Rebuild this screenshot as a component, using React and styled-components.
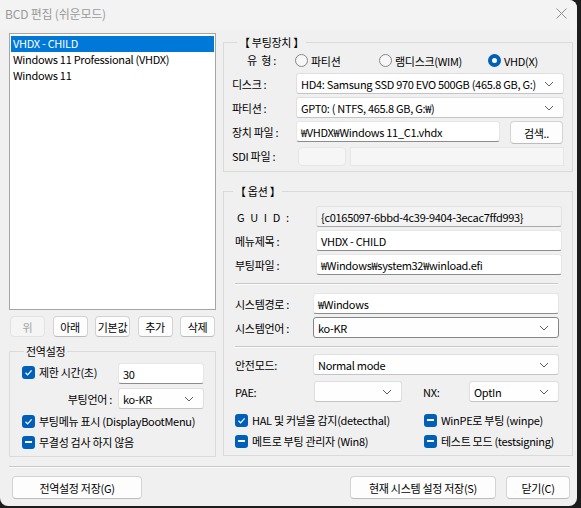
import styled, { createGlobalStyle } from "styled-components";

const GlobalStyle = createGlobalStyle`
  html, body {
    margin: 0;
    padding: 0;
    background: #1c1c1c;
  }
  body {
    font-family: "Noto Sans CJK KR", "Liberation Sans", sans-serif;
    font-size: 11px;
    letter-spacing: -0.3px;
    line-height: 16px;
    color: #000;
  }
`;

const Chevron = () => (
  <svg width="10" height="6" viewBox="0 0 10 6">
    <polyline points="1,1 5,5 9,1" fill="none" stroke="#5f5f5f" strokeWidth="1" />
  </svg>
);

const Check = () => (
  <svg width="9" height="9" viewBox="0 0 9 9">
    <polyline points="1.5,4.8 3.6,6.8 7.6,2.4" fill="none" stroke="#fff" strokeWidth="1.2" />
  </svg>
);

const CheckBox = ({ mode = "check", children }) => (
  <CheckRow>
    <Box>{mode === "check" ? <Check /> : <Dash />}</Box>
    <span>{children}</span>
  </CheckRow>
);

const Radio = ({ checked, children }) => (
  <RadioItem>
    <RadioDot $checked={checked} />
    <span>{children}</span>
  </RadioItem>
);

const Select = ({ value, focused, width }) => (
  <Combo $focused={focused} $width={width}>
    <span>{value}</span>
    <Chevron />
  </Combo>
);

export default function App() {
  return (
    <>
      <GlobalStyle />
      <Window>
        <TitleBar>
          <Title>BCD 편집 (쉬운모드)</Title>
          <svg width="11" height="11" viewBox="0 0 11 11">
            <path d="M0.5 0.5 L10.5 10.5 M10.5 0.5 L0.5 10.5" stroke="#8f8f8f" strokeWidth="1" />
          </svg>
        </TitleBar>

        <Body>
          <LeftCol>
            <ListBox>
              <ListItem $selected>VHDX - CHILD</ListItem>
              <ListItem>Windows 11 Professional (VHDX)</ListItem>
              <ListItem>Windows 11</ListItem>
            </ListBox>
            <ButtonRow>
              <SmallButton disabled>위</SmallButton>
              <SmallButton>아래</SmallButton>
              <SmallButton>기본값</SmallButton>
              <SmallButton>추가</SmallButton>
              <SmallButton>삭제</SmallButton>
            </ButtonRow>
            <Group $pad="5px 11px 5px 12px">
              <Legend $offset="2px">전역설정</Legend>
              <GlobalGrid>
                <CheckBox>제한 시간(초)</CheckBox>
                <TextField>30</TextField>
                <FieldLabel $right>부팅언어 :</FieldLabel>
                <Select value="ko-KR" />
              </GlobalGrid>
              <CheckList>
                <CheckBox>부팅메뉴 표시 (DisplayBootMenu)</CheckBox>
                <CheckBox mode="dash">무결성 검사 하지 않음</CheckBox>
              </CheckList>
            </Group>
          </LeftCol>

          <RightCol>
            <Group $pad="0 9px 5px 8px">
              <Legend $offset="5px">【 부팅장치 】</Legend>
              <DeviceGrid>
                <FieldLabel $indent="15px">유&nbsp;&nbsp;형 :</FieldLabel>
                <RadioRow>
                  <Radio>파티션</Radio>
                  <Radio>램디스크(WIM)</Radio>
                  <Radio checked>VHD(X)</Radio>
                </RadioRow>
                <FieldLabel>디스크 :</FieldLabel>
                <Select value="HD4: Samsung SSD 970 EVO 500GB (465.8 GB, G:)" />
                <FieldLabel>파티션 :</FieldLabel>
                <Select value="GPT0: ( NTFS, 465.8 GB, G:₩)" />
                <FieldLabel>장치 파일 :</FieldLabel>
                <FileRow>
                  <TextField>₩VHDX₩Windows 11_C1.vhdx</TextField>
                  <Button $width="53px">검색..</Button>
                </FileRow>
                <FieldLabel>SDI 파일 :</FieldLabel>
                <SdiRow>
                  <DisabledField $width="48px" $round />
                  <DisabledField />
                </SdiRow>
              </DeviceGrid>
            </Group>

            <Group $pad="8px 10px 5px 11px">
              <Legend $offset="-2px">【 옵션 】</Legend>
              <OptionGrid $col="81px" $right="0">
                <FieldLabel $spaced $indent="2px">G U I D :</FieldLabel>
                <ReadOnlyField>{"{c0165097-6bbd-4c39-9404-3ecac7ffd993}"}</ReadOnlyField>
                <FieldLabel>메뉴제목 :</FieldLabel>
                <TextField>VHDX - CHILD</TextField>
                <FieldLabel>부팅파일 :</FieldLabel>
                <TextField>₩Windows₩system32₩winload.efi</TextField>
              </OptionGrid>
              <Separator $margin="8px 4px 8px 0" />
              <OptionGrid $col="78px" $right="3px">
                <FieldLabel>시스템경로 :</FieldLabel>
                <TextField>₩Windows</TextField>
                <FieldLabel>시스템언어 :</FieldLabel>
                <Select value="ko-KR" focused />
              </OptionGrid>
              <Separator $margin="8px 4px 6px 0" />
              <OptionGrid $col="78px" $right="3px">
                <FieldLabel>안전모드:</FieldLabel>
                <Select value="Normal mode" />
              </OptionGrid>
              <PaeRow>
                <FieldLabel>PAE:</FieldLabel>
                <Select value="" />
                <FieldLabel>NX:</FieldLabel>
                <Select value="OptIn" />
              </PaeRow>
              <TwoCheckCols>
                <CheckBox>HAL 및 커널을 감지(detecthal)</CheckBox>
                <CheckBox mode="dash">WinPE로 부팅 (winpe)</CheckBox>
                <CheckBox mode="dash">메트로 부팅 관리자 (Win8)</CheckBox>
                <CheckBox mode="dash">테스트 모드 (testsigning)</CheckBox>
              </TwoCheckCols>
            </Group>
          </RightCol>
        </Body>

        <Separator $margin="9px 7px 8px 9px" />
        <Footer>
          <Button $width="130px">전역설정 저장(G)</Button>
          <FooterRight>
            <Button $width="146px">현재 시스템 설정 저장(S)</Button>
            <Button $width="64px">닫기(C)</Button>
          </FooterRight>
        </Footer>
      </Window>
    </>
  );
}

const Window = styled.div`
  width: 577px;
  height: 506px;
  background: #f0f0f0;
  border-radius: 0 8px 8px 8px;
  overflow: hidden;
  display: flex;
  flex-direction: column;
`;

const TitleBar = styled.div`
  height: 30px;
  flex: none;
  display: flex;
  align-items: center;
  justify-content: space-between;
  padding: 0 10px 3px 5px;
  box-sizing: border-box;
  background: #f3f3f3;
`;

const Title = styled.div`
  color: #9a9a9a;
  font-size: 12px;
  letter-spacing: -0.2px;
  line-height: 14px;
`;

const Body = styled.div`
  display: flex;
  gap: 7px;
  padding: 3px 4px 0 9px;
`;

const LeftCol = styled.div`
  width: 207px;
  display: flex;
  flex-direction: column;
`;

const RightCol = styled.div`
  width: 350px;
  display: flex;
  flex-direction: column;
  gap: 12px;
  padding-top: 2px;
`;

const ListBox = styled.div`
  height: 277px;
  box-sizing: border-box;
  background: #fff;
  border: 1px solid #a5a5a5;
  padding: 2px 1px;
`;

const ListItem = styled.div`
  height: 16px;
  line-height: 15px;
  padding-left: 2px;
  background: ${(p) => (p.$selected ? "#0078d7" : "transparent")};
  color: ${(p) => (p.$selected ? "#fff" : "#000")};
`;

const ButtonRow = styled.div`
  display: flex;
  justify-content: space-between;
  padding: 6px 1px 0 1px;
  margin-bottom: 7px;
`;

const Button = styled.button`
  width: ${(p) => p.$width || "auto"};
  height: 23px;
  padding: 0;
  box-sizing: border-box;
  font-family: inherit;
  font-size: 11px;
  letter-spacing: -0.3px;
  line-height: 16px;
  color: #000;
  white-space: nowrap;
  background: #fdfdfd;
  border: 1px solid #d3d3d3;
  border-bottom-color: #bcbcbc;
  border-radius: 4px;

  &:disabled {
    background: #f5f5f5;
    color: #a3a3a3;
    border-color: #e2e2e2;
  }
`;

const SmallButton = styled(Button)`
  width: 35px;
  height: 21px;
`;

const Group = styled.fieldset`
  margin: 0;
  min-width: 0;
  border: 1px solid #dadada;
  padding: ${(p) => p.$pad};
`;

const Legend = styled.legend`
  margin-left: ${(p) => p.$offset};
  padding: 0 2px;
  line-height: 14px;
`;

const FieldLabel = styled.div`
  display: flex;
  align-items: center;
  justify-content: ${(p) => (p.$right ? "flex-end" : "flex-start")};
  padding-right: ${(p) => (p.$right ? "6px" : "0")};
  padding-left: ${(p) => p.$indent || "0"};
  letter-spacing: ${(p) => (p.$spaced ? "1.6px" : "-0.3px")};
  white-space: nowrap;
`;

const TextField = styled.div`
  height: 21px;
  box-sizing: border-box;
  display: flex;
  align-items: center;
  padding: 0 4px;
  background: #fff;
  border: 1px solid #e6e6e6;
  border-bottom-color: #8c8c8c;
  border-radius: 3px;
  white-space: nowrap;
  overflow: hidden;
`;

const ReadOnlyField = styled(TextField)`
  background: #f3f3f3;
  border-color: #e2e2e2;
  border-bottom-color: #a8a8a8;
`;

const DisabledField = styled.div`
  width: ${(p) => p.$width || "auto"};
  flex: ${(p) => (p.$width ? "none" : "1")};
  height: 19px;
  box-sizing: border-box;
  background: #f6f6f6;
  border: 1px solid #e6e6e6;
  border-radius: ${(p) => (p.$round ? "4px" : "0")};
`;

const Combo = styled.div`
  height: 21px;
  width: ${(p) => p.$width || "auto"};
  box-sizing: border-box;
  display: flex;
  align-items: center;
  justify-content: space-between;
  padding: 0 9px 0 4px;
  background: #fefefe;
  border: 1px solid ${(p) => (p.$focused ? "#858585" : "#dfdfdf")};
  border-bottom-color: ${(p) => (p.$focused ? "#858585" : "#c4c4c4")};
  border-radius: 3px;
  white-space: nowrap;
  overflow: hidden;
`;

const CheckRow = styled.div`
  display: flex;
  align-items: center;
  gap: 4px;
  height: 18px;
  white-space: nowrap;
`;

const Box = styled.span`
  width: 13px;
  height: 13px;
  flex: none;
  border-radius: 3px;
  background: #005fb8;
  display: flex;
  align-items: center;
  justify-content: center;
`;

const Dash = styled.span`
  width: 7px;
  height: 1.5px;
  background: #fff;
`;

const GlobalGrid = styled.div`
  display: grid;
  grid-template-columns: 96px 86px;
  grid-auto-rows: 21px;
  row-gap: 4px;
`;

const CheckList = styled.div`
  display: flex;
  flex-direction: column;
  gap: 3px;
  margin-top: 3px;
`;

const DeviceGrid = styled.div`
  display: grid;
  grid-template-columns: 64px 1fr;
  grid-auto-rows: 21px;
  row-gap: 3px;
  margin-right: -1px;
`;

const RadioRow = styled.div`
  display: flex;
  align-items: center;
  padding-top: 2px;
  margin-left: -1px;
`;

const RadioItem = styled.div`
  display: flex;
  align-items: center;
  gap: 3px;
  white-space: nowrap;
  margin-right: 14px;

  &:nth-child(1) {
    width: 70px;
  }
  &:nth-child(2) {
    width: 95px;
  }
`;

const RadioDot = styled.span`
  width: 13px;
  height: 13px;
  flex: none;
  box-sizing: border-box;
  border-radius: 50%;
  border: ${(p) => (p.$checked ? "4px solid #005fb8" : "1px solid #868686")};
  background: ${(p) => (p.$checked ? "#fff" : "#f7f7f7")};
`;

const FileRow = styled.div`
  display: grid;
  grid-template-columns: 204px 53px;
  column-gap: 10px;
`;

const SdiRow = styled.div`
  display: flex;
  gap: 4px;
  align-items: flex-end;
  padding-left: 2px;
`;

const OptionGrid = styled.div`
  display: grid;
  grid-template-columns: ${(p) => p.$col} 1fr;
  grid-auto-rows: 21px;
  row-gap: 3px;
  margin-right: ${(p) => p.$right};
`;

const Separator = styled.div`
  height: 1px;
  background: #c8c8c8;
  border-bottom: 1px solid #fcfcfc;
  margin: ${(p) => p.$margin};
`;

const PaeRow = styled.div`
  display: grid;
  grid-template-columns: 79px 88px 67px 1fr;
  height: 20px;
  margin: 6px 3px 0 0;

  & > div:nth-child(3) {
    padding-left: 21px;
  }
`;

const TwoCheckCols = styled.div`
  display: grid;
  grid-template-columns: 189px 1fr;
  row-gap: 3px;
  margin-top: 10px;
`;

const Footer = styled.div`
  display: flex;
  justify-content: space-between;
  padding: 0 7px 0 12px;
`;

const FooterRight = styled.div`
  display: flex;
  gap: 10px;
`;
